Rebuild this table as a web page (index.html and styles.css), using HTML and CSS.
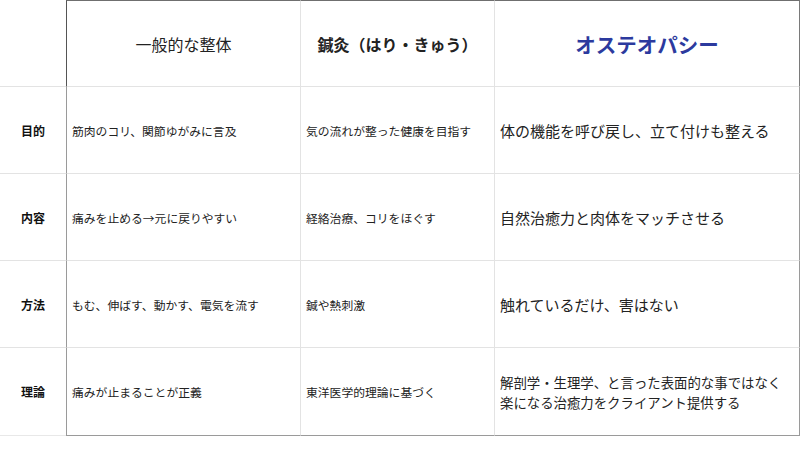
FILE: index.html
```html
<!DOCTYPE html>
<html lang="ja">
<head>
<meta charset="utf-8">
<title>比較表</title>
<link rel="stylesheet" href="styles.css">
</head>
<body>
<div class="table">
  <div class="cell label"></div>
  <div class="cell head c1 first">一般的な整体</div>
  <div class="cell head c2 bold">鍼灸（はり・きゅう）</div>
  <div class="cell head c3 last accent">オステオパシー</div>

  <div class="cell label">目的</div>
  <div class="cell body c1 first">筋肉のコリ、関節ゆがみに言及</div>
  <div class="cell body c2">気の流れが整った健康を目指す</div>
  <div class="cell body c3 last big">体の機能を呼び戻し、立て付けも整える</div>

  <div class="cell label">内容</div>
  <div class="cell body c1 first">痛みを止める→元に戻りやすい</div>
  <div class="cell body c2">経絡治療、コリをほぐす</div>
  <div class="cell body c3 last big">自然治癒力と肉体をマッチさせる</div>

  <div class="cell label">方法</div>
  <div class="cell body c1 first">もむ、伸ばす、動かす、電気を流す</div>
  <div class="cell body c2">鍼や熱刺激</div>
  <div class="cell body c3 last big">触れているだけ、害はない</div>

  <div class="cell label bottom-light">理論</div>
  <div class="cell body c1 first bottom">痛みが止まることが正義</div>
  <div class="cell body c2 bottom">東洋医学的理論に基づく</div>
  <div class="cell body c3 last bottom mid">解剖学・生理学、と言った表面的な事ではなく<br>楽になる治癒力をクライアント提供する</div>
</div>
</body>
</html>
```
FILE: styles.css
```css
html, body {
  margin: 0;
  padding: 0;
  background: #ffffff;
}
body {
  font-family: "Noto Sans CJK JP", "Noto Sans", sans-serif;
  color: #222222;
  width: 800px;
  height: 450px;
  overflow: hidden;
}
.table {
  display: grid;
  grid-template-columns: 66px 235px 194px 305px;
  grid-template-rows: 87px 87px 87px 87px 88px;
}
.cell {
  box-sizing: border-box;
  display: flex;
  align-items: center;
  border-bottom: 1px solid #e3e3e3;
  border-right: 1px solid #e3e3e3;
}
.label {
  justify-content: center;
  font-size: 12px;
  font-weight: 700;
  border-right: none;
  color: #111;
}
.head {
  justify-content: center;
  border-top: 1px solid #6f6f6f;
  font-size: 16px;
}
.head.first {
  border-left: 1px solid #555;
}
.body.first {
  border-left: 1px solid #9a9a9a;
}
.head.last {
  border-right: 1px solid #7a7a7a;
}
.body.last {
  border-right: 1px solid #9a9a9a;
}
.bold {
  font-weight: 700;
}
.accent {
  font-weight: 700;
  font-size: 20.5px;
  color: #2c3a9e;
}
.body {
  padding-left: 5px;
  font-size: 11.8px;
}
.body.big {
  font-size: 15px;
}
.body.mid {
  font-size: 13.4px;
  line-height: 20px;
}
.bottom {
  border-bottom: 1px solid #9a9a9a;
}
.bottom-light {
  border-bottom: 1px solid #e8e8e8;
}
```
